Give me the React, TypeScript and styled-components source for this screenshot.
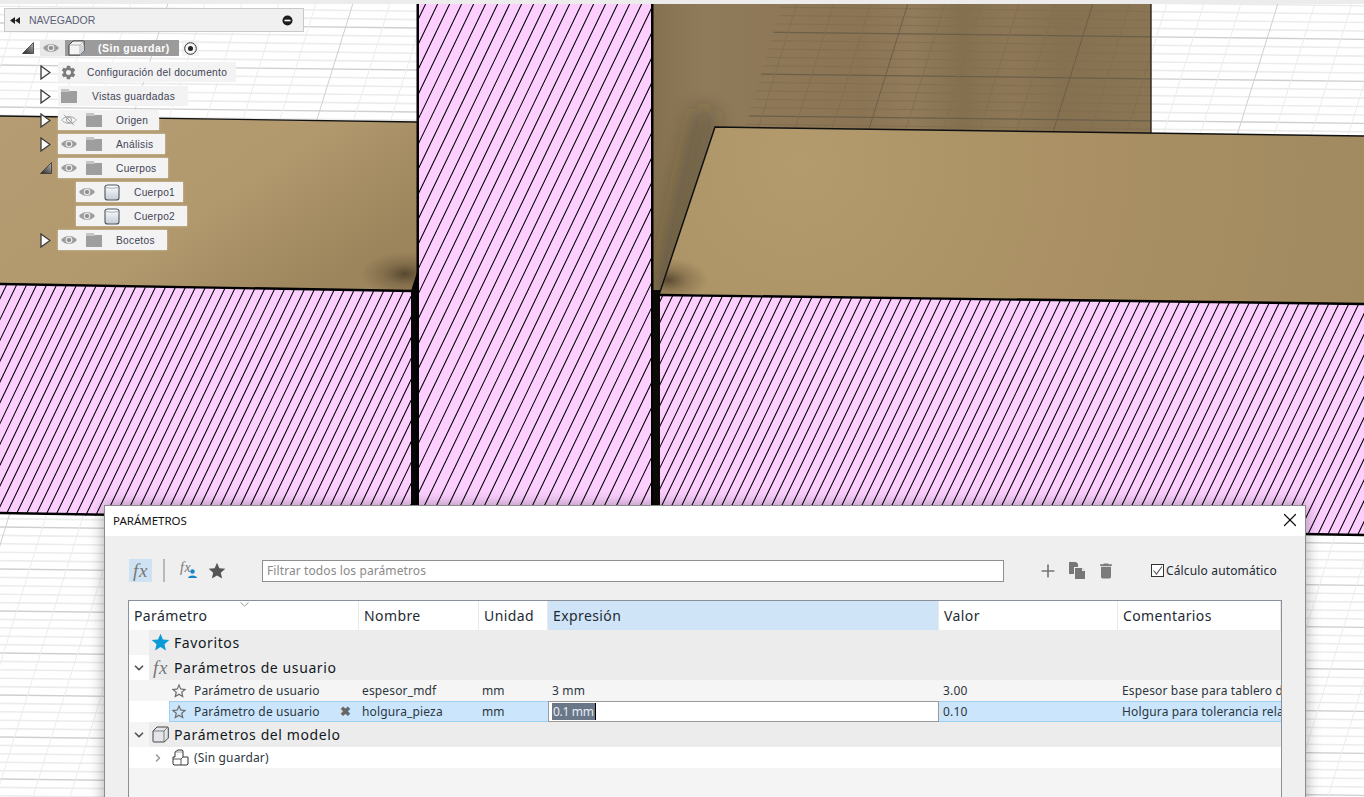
import React from "react";
import styled, { createGlobalStyle } from "styled-components";
import { X, ChevronDown, ChevronRight, Plus } from "lucide-react";
import { MdSettings, MdDelete, MdStar, MdStarBorder } from "react-icons/md";

const Global = createGlobalStyle`
  html, body { margin: 0; padding: 0; background: #fff; overflow: hidden; }
  #root { width: 1364px; height: 797px; }
`;

const Page = styled.div`
  position: relative;
  width: 1364px;
  height: 797px;
  overflow: hidden;
`;

const Scene = styled.svg`
  position: absolute;
  inset: 0;
  display: block;
`;

/* ---------- viewport drawing ---------- */
const horizontals = () => {
  const out: { y: number; major: boolean }[] = [];
  for (let i = -5; i < 110; i++) out.push({ y: 23 - 42 + (i * 42) / 5, major: i % 5 === 0 });
  return out;
};

const GridLines: React.FC<{ major: string; minor: string; slants: number[]; slope: number; step: number; minorWidth: number }> = ({
  major,
  minor,
  slants,
  slope,
  step,
  minorWidth,
}) => (
  <>
    {horizontals().map((l, i) => (
      <line
        key={i}
        x1={0}
        y1={l.y}
        x2={1364}
        y2={l.y + 1364 * 0.012}
        stroke={l.major ? major : minor}
        strokeWidth={l.major ? 1.3 : minorWidth}
      />
    ))}
    {slants.map((x, i) => (
      <line
        key={i}
        x1={x}
        y1={0}
        x2={x - slope * 800}
        y2={800}
        stroke={i % step === 0 ? major : minor}
        strokeWidth={1}
      />
    ))}
  </>
);

const range = (a: number, n: number, d: number) => Array.from({ length: n }, (_, i) => a + i * d);

const Hatch: React.FC<{ id: string; points: string; period: number; base: number; top: number; bottom: number; count: number }> = ({
  id,
  points,
  period,
  base,
  top,
  bottom,
  count,
}) => {
  const run = (bottom - top) / 2.08;
  return (
    <>
      <clipPath id={id}>
        <polygon points={points} />
      </clipPath>
      <polygon points={points} fill="#fccfff" />
      <g clipPath={`url(#${id})`} stroke="#000" strokeWidth={1.05}>
        {range(base, count, period).map((x) => (
          <line key={x} x1={x} y1={top} x2={x - run} y2={bottom} />
        ))}
      </g>
    </>
  );
};

const Viewport = () => (
  <Scene width={1364} height={797} viewBox="0 0 1364 797">
    <defs>
      <linearGradient id="wall" x1="0" x2="1" y1="0" y2="0">
        <stop offset="0" stopColor="#85714f" />
        <stop offset="0.1" stopColor="#8f7a59" />
        <stop offset="0.28" stopColor="#8d7756" />
        <stop offset="0.42" stopColor="#8a7453" />
        <stop offset="0.52" stopColor="#917b5a" />
        <stop offset="0.62" stopColor="#84704f" />
        <stop offset="0.72" stopColor="#8d7756" />
        <stop offset="0.82" stopColor="#857150" />
        <stop offset="1" stopColor="#8a7554" />
      </linearGradient>
      <radialGradient id="plateR" gradientUnits="userSpaceOnUse" cx="800" cy="165" r="620">
        <stop offset="0" stopColor="#b39b6d" />
        <stop offset="0.5" stopColor="#a98f63" />
        <stop offset="1" stopColor="#a08960" />
      </radialGradient>
      <linearGradient id="plateL" x1="0" x2="1" y1="0" y2="0.6">
        <stop offset="0" stopColor="#b59c72" />
        <stop offset="0.6" stopColor="#b1986d" />
        <stop offset="1" stopColor="#9c845c" />
      </linearGradient>
      <radialGradient id="spot">
        <stop offset="0" stopColor="#4a3d28" stopOpacity="0.85" />
        <stop offset="0.5" stopColor="#5a4a30" stopOpacity="0.35" />
        <stop offset="1" stopColor="#5a4a30" stopOpacity="0" />
      </radialGradient>
      <filter id="soft" x="-100%" y="-30%" width="300%" height="160%">
        <feGaussianBlur stdDeviation="10" />
      </filter>
      <clipPath id="clipWhite">
        <rect x={0} y={4} width={417} height={120} />
        <rect x={1152} y={4} width={212} height={132} />
        <polygon points="0,513 1364,535 1364,797 0,797" />
      </clipPath>
      <clipPath id="clipWallGrid">
        <polygon points="782,4 1151,4 1151,133 745,128" />
      </clipPath>
      <clipPath id="clipWall">
        <polygon points="653,4 1151,4 1151,134 715,127 660,294 653,294" />
      </clipPath>
      <clipPath id="clipPlateR">
        <polygon points="715,127 1364,136 1364,304 660,294" />
      </clipPath>
      <clipPath id="clipPlateL">
        <polygon points="0,116 417,122 417,291 0,284" />
      </clipPath>
    </defs>

    <rect width={1364} height={797} fill="#fff" />
    <rect width={1364} height={4} fill="#ececec" />

    <g clipPath="url(#clipWhite)">
      <GridLines major="#cfcfcf" minor="#ececec" slants={range(-16, 60, 37)} slope={0.31} step={5} minorWidth={1.6} />
    </g>

    {/* back wall */}
    <polygon points="653,4 1151,4 1151,134 715,127 660,294 653,294" fill="url(#wall)" />
    <g clipPath="url(#clipWallGrid)">
      <GridLines major="#6b5f4a" minor="#826f51" slants={range(-16, 60, 37)} slope={0.31} step={5} minorWidth={1} />
    </g>
    <g clipPath="url(#clipWall)">
      <line x1="706" y1="110" x2="664" y2="300" stroke="#2e2616" strokeWidth="26" strokeOpacity="0.32" filter="url(#soft)" />
    </g>
    <line x1="1151" y1="4" x2="1151" y2="134" stroke="#2b2416" strokeWidth={1.4} />

    {/* left plate */}
    <polygon points="0,116 417,122 417,291 0,284" fill="url(#plateL)" />
    <g clipPath="url(#clipPlateL)">
      <ellipse cx={405} cy={274} rx={44} ry={22} fill="url(#spot)" />
    </g>
    <line x1="0" y1="116" x2="417" y2="122" stroke="#111" strokeWidth={1.3} />

    {/* right plate */}
    <polygon points="715,127 1364,136 1364,304 660,294" fill="url(#plateR)" />
    <g clipPath="url(#clipPlateR)">
      <ellipse cx={668} cy={280} rx={40} ry={22} fill="url(#spot)" />
    </g>
    <polyline points="659,295 715,127 1364,136" fill="none" stroke="#111" strokeWidth={1.5} />

    {/* cut faces */}
    <Hatch id="cutL" points="0,285 411,291 411,525 0,513" period={10} base={7} top={284} bottom={530} count={56} />
    <Hatch id="cutR" points="660,295 1364,304 1364,535 660,525" period={10} base={663} top={295} bottom={540} count={84} />
    <Hatch id="cutC" points="418,4 652,4 652,514 418,514" period={12} base={425.6} top={4} bottom={514} count={41} />

    <line x1="0" y1="284" x2="412" y2="291" stroke="#000" strokeWidth={2.4} />
    <line x1="660" y1="295" x2="1364" y2="304" stroke="#000" strokeWidth={2.4} />
    <line x1="0" y1="513" x2="1364" y2="535" stroke="#000" strokeWidth={2.4} />
    <polygon points="411,291 417,272 418,510 411,510" fill="#050505" />
    <rect x={416.5} y={4} width={2.5} height={510} fill="#000" />
    <rect x={651} y={4} width={2.5} height={510} fill="#000" />
    <polygon points="653,290 660,290 660,510 653,510" fill="#0c0a06" />
  </Scene>
);

/* ---------- navigator ---------- */
const Navigator = styled.div`
  position: absolute;
  left: 4px;
  top: 8px;
  width: 300px;
  font-family: "Liberation Sans", Arial, sans-serif;
`;

const NavHeader = styled.div`
  box-sizing: border-box;
  height: 24px;
  display: flex;
  align-items: center;
  gap: 9px;
  padding: 0 10px 0 5px;
  background: #f0f0f0;
  border: 1px solid #c9c9c9;
  color: #5b6076;
  font-size: 10.5px;
`;

const NavTitle = styled.span`
  flex: 1;
`;

const NavTree = styled.div`
  margin-left: -4px;
  padding-top: 4px;
`;

const NavRow = styled.div<{ $level: number }>`
  height: 24px;
  display: flex;
  align-items: center;
  padding-left: ${(p) => 22 + p.$level * 18}px;
`;

const Twist = styled.span`
  width: 18px;
  flex: none;
  display: flex;
  justify-content: flex-start;
  align-items: center;
`;

const NavBlock = styled.div<{ $end?: number }>`
  height: 20px;
  display: flex;
  align-items: center;
  background: #f3f3f3;
  box-shadow: 0 0 2px rgba(255, 255, 255, 0.5);
  padding: 0 ${(p) => p.$end ?? 11}px 0 3px;
  gap: 9px;
`;

const NavLabel = styled.span<{ $gap: number }>`
  margin-left: ${(p) => p.$gap}px;
  font-size: 10.2px;
  letter-spacing: 0.28px;
  color: #3f4356;
  white-space: nowrap;
`;

const RootEye = styled.div`
  width: 25px;
  height: 16px;
  background: #e8e8e8;
  display: flex;
  align-items: center;
  padding-left: 3px;
  box-sizing: border-box;
`;

const RootBlock = styled.div`
  width: 114px;
  height: 16px;
  background: #9b9b9b;
  display: flex;
  align-items: center;
  padding-left: 3px;
  box-sizing: border-box;
`;

const RootLabel = styled.span`
  margin-left: 13px;
  color: #fff;
  font-size: 10.5px;
  font-weight: bold;
  letter-spacing: 0.5px;
`;

const RadioBox = styled.div`
  width: 17px;
  height: 16px;
  margin-left: 3px;
  background: rgba(240, 240, 240, 0.7);
  display: flex;
  align-items: center;
  justify-content: center;
`;

const Eye: React.FC<{ off?: boolean }> = ({ off }) => (
  <svg width="16" height="12" viewBox="0 0 16 12">
    {off ? (
      <>
        <path d="M.6 6C4 1.500 12 1.500 15.400 6 12 10.500 4 10.500.6 6Z" fill="none" stroke="#a8a8a8" strokeWidth="1" />
        <circle cx="8" cy="6" r="2.600" fill="none" stroke="#a8a8a8" />
        <path d="M3 .8 13 11.200" stroke="#9c9c9c" strokeWidth="1" />
      </>
    ) : (
      <>
        <path d="M0 6C4 .7 12 .7 16 6 12 11.300 4 11.300 0 6Z" fill="#9c9c9c" />
        <circle cx="8" cy="6" r="3.400" fill="#e4e4e4" />
        <circle cx="8" cy="6" r="2.100" fill="#8d8d8d" />
      </>
    )}
  </svg>
);

const Folder = () => (
  <svg width="16" height="14" viewBox="0 0 16 14">
    <path d="M0 0h7l1.500 2H16v12H0Z" fill="#9e9e9e" />
    <path d="M0 0h7l1.500 2v1H0Z" fill="#c4c4c4" />
  </svg>
);

const Gear = styled(MdSettings)`
  width: 17px;
  height: 17px;
  color: #7c7c7c;
  flex: none;
  margin-left: -1px;
`;

const Cyl = () => (
  <svg width="16" height="17" viewBox="0 0 16 17">
    <defs>
      <linearGradient id="cy" x1="0" x2="0" y1="0" y2="1">
        <stop offset="0" stopColor="#fff" />
        <stop offset="1" stopColor="#c4ccd6" />
      </linearGradient>
    </defs>
    <path d="M1 3Q1 1 4 1h8q3 0 3 2v11q0 2-3 2H4q-3 0-3-2Z" fill="url(#cy)" stroke="#4d5560" strokeWidth="1.100" />
    <path d="M1.500 3.500q6.500 1.500 13 0" fill="none" stroke="#9aa0a8" strokeWidth=".8" />
  </svg>
);

const NavCube = () => (
  <svg width="17" height="16" viewBox="0 0 17 16">
    <path d="M1 5 5 1h11v9.500l-4 4.500H1Z" fill="#f4f4f4" stroke="#333" strokeWidth=".9" />
    <path d="M12 15V5H1M12 5l4-4" fill="none" stroke="#999" strokeWidth=".7" />
    <path d="M12 5h4v5.500l-4 4.500Z" fill="#cfd4da" />
  </svg>
);

const Closed = () => (
  <svg width="11" height="15" viewBox="0 0 11 15">
    <path d="M1 1 10 7.500 1 14Z" fill="#fbfbfb" stroke="#3a3a3a" strokeWidth="1.300" />
  </svg>
);

const Opened = () => (
  <svg width="12" height="12" viewBox="0 0 12 12">
    <defs>
      <linearGradient id="opn" x1="0" x2="1" y1="1" y2="0">
        <stop offset="0" stopColor="#222" />
        <stop offset="1" stopColor="#b8b8b8" />
      </linearGradient>
    </defs>
    <path d="M.5 11.500 11.500.5v11Z" fill="url(#opn)" stroke="#333" strokeWidth=".8" />
  </svg>
);

const Rewind = () => (
  <svg width="10" height="7" viewBox="0 0 10 7">
    <path d="M5 0v7L0 3.500ZM10 0v7L5 3.500Z" fill="#222" />
  </svg>
);

const Collapse = () => (
  <svg width="11" height="11" viewBox="0 0 11 11">
    <circle cx="5.500" cy="5.500" r="5" fill="#1d1d1d" />
    <rect x="2.500" y="4.700" width="6" height="1.600" fill="#fff" />
  </svg>
);

const Radio = () => (
  <svg width="13" height="13" viewBox="0 0 13 13">
    <circle cx="6.500" cy="6.500" r="5.800" fill="#f5f5f5" stroke="#333" strokeWidth="1" />
    <circle cx="6.500" cy="6.500" r="2.500" fill="#222" />
  </svg>
);

const NavPanel = () => (
  <Navigator>
    <NavHeader>
      <Rewind />
      <NavTitle>NAVEGADOR</NavTitle>
      <Collapse />
    </NavHeader>
    <NavTree>
      <NavRow $level={0}>
        <Twist>
          <Opened />
        </Twist>
        <RootEye>
          <Eye />
        </RootEye>
        <RootBlock>
          <NavCube />
          <RootLabel>(Sin guardar)</RootLabel>
        </RootBlock>
        <RadioBox>
          <Radio />
        </RadioBox>
      </NavRow>
      <NavRow $level={1}>
        <Twist>
          <Closed />
        </Twist>
        <NavBlock $end={9}>
          <Gear />
          <NavLabel $gap={1}>Configuración del documento</NavLabel>
        </NavBlock>
      </NavRow>
      <NavRow $level={1}>
        <Twist>
          <Closed />
        </Twist>
        <NavBlock $end={13}>
          <Folder />
          <NavLabel $gap={6}>Vistas guardadas</NavLabel>
        </NavBlock>
      </NavRow>
      <NavRow $level={1}>
        <Twist>
          <Closed />
        </Twist>
        <NavBlock>
          <Eye off />
          <Folder />
          <NavLabel $gap={5}>Origen</NavLabel>
        </NavBlock>
      </NavRow>
      <NavRow $level={1}>
        <Twist>
          <Closed />
        </Twist>
        <NavBlock $end={12}>
          <Eye />
          <Folder />
          <NavLabel $gap={5}>Análisis</NavLabel>
        </NavBlock>
      </NavRow>
      <NavRow $level={1}>
        <Twist>
          <Opened />
        </Twist>
        <NavBlock $end={12}>
          <Eye />
          <Folder />
          <NavLabel $gap={5}>Cuerpos</NavLabel>
        </NavBlock>
      </NavRow>
      <NavRow $level={2}>
        <Twist />
        <NavBlock $end={8}>
          <Eye />
          <Cyl />
          <NavLabel $gap={5}>Cuerpo1</NavLabel>
        </NavBlock>
      </NavRow>
      <NavRow $level={2}>
        <Twist />
        <NavBlock $end={12}>
          <Eye />
          <Cyl />
          <NavLabel $gap={5}>Cuerpo2</NavLabel>
        </NavBlock>
      </NavRow>
      <NavRow $level={1}>
        <Twist>
          <Closed />
        </Twist>
        <NavBlock $end={12}>
          <Eye />
          <Folder />
          <NavLabel $gap={5}>Bocetos</NavLabel>
        </NavBlock>
      </NavRow>
    </NavTree>
  </Navigator>
);

/* ---------- dialog ---------- */
const Dialog = styled.div`
  position: absolute;
  left: 104px;
  top: 505px;
  width: 1202px;
  height: 320px;
  box-sizing: border-box;
  background: #efefef;
  border: 1px solid #8b8b8b;
  border-bottom: 0;
  box-shadow: 0 0 14px rgba(0, 0, 0, 0.35);
  font-family: "Noto Sans", sans-serif;
  color: #1e2a33;
`;

const TitleBar = styled.div`
  box-sizing: border-box;
  height: 30px;
  background: #fff;
  display: flex;
  align-items: center;
  justify-content: space-between;
  padding: 0 4px 2px 8px;
  font-size: 11.5px;
  color: #111;
`;

const Toolbar = styled.div`
  height: 23px;
  margin-top: 23px;
  padding-left: 24px;
  display: flex;
  align-items: center;
`;

const ToolToggle = styled.div`
  width: 23px;
  height: 23px;
  flex: none;
  background: #cfe2f3;
  display: flex;
  align-items: center;
  justify-content: center;
`;

const Fx = styled.span<{ $size?: number }>`
  display: block;
  font-family: "Liberation Serif", serif;
  font-style: italic;
  font-size: ${(p) => p.$size ?? 19}px;
  color: #777;
  line-height: 1;
  letter-spacing: 0.6px;
`;

const ToolSep = styled.div`
  width: 2px;
  height: 23px;
  flex: none;
  margin: 0 15px 0 11px;
  background: #b9b9b9;
`;

const FxUser = styled.div`
  position: relative;
  width: 18px;
  height: 20px;
  flex: none;
  margin-right: 9px;
`;

const FxUserBadge = styled.svg`
  position: absolute;
  right: 1px;
  bottom: 3px;
`;

const ToolStar = styled(MdStar)`
  width: 20px;
  height: 20px;
  color: #555;
  flex: none;
`;

const FilterBox = styled.div`
  box-sizing: border-box;
  width: 742px;
  height: 22px;
  flex: none;
  margin-left: 35px;
  background: #fff;
  border: 1px solid #8f8f8f;
  padding-left: 4px;
  font-size: 12px;
  letter-spacing: 0.1px;
  line-height: 20px;
  color: #8a8a8a;
`;

const ToolActions = styled.div`
  display: flex;
  align-items: center;
  flex: none;
  margin-left: 34px;
  gap: 10.5px;
  color: #777;
`;

const ActionPlus = styled(Plus)`
  width: 20px;
  height: 20px;
`;

const ActionTrash = styled(MdDelete)`
  width: 20px;
  height: 20px;
  color: #7b7b7b;
`;

const AutoCalc = styled.label`
  margin-left: 35px;
  flex: none;
  display: flex;
  align-items: center;
  gap: 2px;
  font-size: 12px;
  letter-spacing: 0.15px;
  white-space: nowrap;
`;

const Check = styled.span`
  box-sizing: border-box;
  width: 13px;
  height: 13px;
  border: 1px solid #333;
  background: #fff;
  display: flex;
`;

const Table = styled.div`
  box-sizing: border-box;
  margin: 18px 0 0 23px;
  width: 1154px;
  height: 210px;
  border: 1px solid #8a9099;
  border-bottom: 0;
  overflow: hidden;
  background: #f4f4f4;
`;

const HeadRow = styled.div`
  display: grid;
  grid-template-columns: 230px 120px 69px 391px 179px 163px;
  height: 29px;
  background: #fff;
  position: relative;
`;

const HeadCell = styled.div<{ $active?: boolean }>`
  box-sizing: border-box;
  padding: 5px 0 0 5px;
  font-size: 14px;
  letter-spacing: 0.4px;
  border-right: 1px solid #e9e9e9;
  background: ${(p) => (p.$active ? "#cfe5f7" : "#fff")};
`;

const SortMark = styled.svg`
  position: absolute;
  left: 111px;
  top: 1px;
`;

const SectionRow = styled.div<{ $band?: boolean; $h: number }>`
  height: ${(p) => p.$h}px;
  display: flex;
  align-items: center;
  background: ${(p) => (p.$band ? "#f5f5f5" : "#fff")};
`;

const Gutter = styled.div`
  width: 20px;
  flex: none;
  display: flex;
  justify-content: center;
  color: #555;
`;

const SectionBody = styled.div`
  flex: 1;
  height: 100%;
  display: flex;
  align-items: center;
  background: #ececec;
  padding-left: 1px;
`;

const SectionIcon = styled.span`
  width: 21px;
  flex: none;
  display: flex;
  justify-content: center;
  align-items: center;
`;

const SectionText = styled.span`
  font-size: 14px;
  letter-spacing: 0.6px;
  margin-left: 3px;
  font-weight: 400;
  color: #12181d;
`;

const BlueStar = styled(MdStar)`
  width: 21px;
  height: 21px;
  color: #0a9ad6;
`;

const DataRow = styled.div`
  height: 21px;
  display: grid;
  grid-template-columns: 229px 120px 70px 391px 179px 163px;
  align-items: center;
  font-size: 12px;
  letter-spacing: 0.15px;
  color: #2b3640;
  background: #f5f5f5;
`;

const SelectedWrap = styled.div`
  background: #fff;
  height: 21px;
  padding-left: 40px;
`;

const SelectedRow = styled(DataRow)`
  background: #cbe6fc;
  box-shadow: inset 0 1px 0 #9fd0f3, inset 0 -1px 0 #9fd0f3, inset 1px 0 0 #9fd0f3;
  grid-template-columns: 189px 120px 70px 391px 179px 163px;
`;

const NameCell = styled.div<{ $inset: number }>`
  display: flex;
  align-items: center;
  padding-left: ${(p) => p.$inset}px;
  min-width: 0;
  position: relative;
  white-space: nowrap;
`;

const RowStar = styled(MdStarBorder)`
  width: 18px;
  height: 18px;
  color: #6d6d6d;
  flex: none;
  margin-right: 6px;
`;

const ClearMark = styled.span`
  position: absolute;
  right: 7px;
  color: #666;
  font-size: 13px;
  font-weight: 700;
  line-height: 1;
`;

const Cell = styled.div`
  padding-left: 4px;
  white-space: nowrap;
  overflow: hidden;
`;

const EditCell = styled.div`
  box-sizing: border-box;
  height: 21px;
  background: #fff;
  border: 1px solid #9a9a9a;
  padding-left: 3px;
  display: flex;
  align-items: center;
`;

const Selection = styled.span`
  background: #697789;
  color: #e8edf2;
  height: 17px;
  line-height: 17px;
  padding: 0 1px;
  letter-spacing: -0.3px;
  border-right: 1px solid #000;
`;

const TreeRow = styled.div`
  height: 21px;
  background: #fff;
  display: flex;
  align-items: center;
  font-size: 12px;
  letter-spacing: 0.15px;
  padding-left: 23px;
  color: #2b3640;
`;

const TreeLabel = styled.span`
  margin-left: 5px;
`;

const TreeArrow = styled(ChevronRight)`
  width: 12px;
  height: 12px;
  color: #999;
  margin-right: 8px;
  stroke-width: 3;
`;

const GutterChevron = styled(ChevronDown)`
  width: 14px;
  height: 14px;
  stroke-width: 3;
`;

const CloseIcon = styled(X)`
  width: 22px;
  height: 22px;
  color: #111;
  stroke-width: 1.3;
`;

const BigCube = () => (
  <svg width="17" height="17" viewBox="0 0 17 17">
    <path d="M1 5 5 1h10.500q.8 0 .8.8V12l-4 4H1.800q-.8 0-.8-.8Z" fill="#e3e5e8" stroke="#333" strokeWidth=".9" />
    <path d="M1 5h11v11M12 5l4-4" fill="none" stroke="#555" strokeWidth=".7" />
  </svg>
);

const Assembly = () => (
  <svg width="17" height="17" viewBox="0 0 17 17">
    <path d="M3 8V3l3-2h4l1 1v6h5v7l-1 1H2l-1-1V8Z" fill="#fff" stroke="#333" strokeWidth="1" />
    <path d="M1 10h8v6M9 10l2-2" fill="none" stroke="#333" strokeWidth=".8" />
    <path d="M3 3h8" stroke="#777" strokeWidth=".7" />
  </svg>
);

const Copy = () => (
  <svg width="17" height="17" viewBox="0 0 17 17">
    <path d="M0 0h7l2 2v3H5v7H0Z" fill="#777" />
    <path d="M6 6h7l3 3v8H6Z" fill="#777" />
    <path d="M13 6v3h3Z" fill="#eee" />
  </svg>
);

const Params = () => (
  <Dialog>
    <TitleBar>
      <span>PARÁMETROS</span>
      <CloseIcon />
    </TitleBar>
    <Toolbar>
      <ToolToggle>
        <Fx>fx</Fx>
      </ToolToggle>
      <ToolSep />
      <FxUser>
        <Fx $size={14}>fx</Fx>
        <FxUserBadge width="9" height="9" viewBox="0 0 9 9">
          <circle cx="4.500" cy="2.500" r="2.200" fill="#1287c9" />
          <path d="M0 9c0-3.500 9-3.500 9 0Z" fill="#1287c9" />
        </FxUserBadge>
      </FxUser>
      <ToolStar />
      <FilterBox>Filtrar todos los parámetros</FilterBox>
      <ToolActions>
        <ActionPlus />
        <Copy />
        <ActionTrash />
      </ToolActions>
      <AutoCalc>
        <Check>
          <svg width="11" height="11" viewBox="0 0 11 11">
            <path d="M1.500 5.500 4.500 9 10 1.500" fill="none" stroke="#555" strokeWidth="1.100" />
          </svg>
        </Check>
        Cálculo automático
      </AutoCalc>
    </Toolbar>
    <Table>
      <HeadRow>
        <HeadCell>Parámetro</HeadCell>
        <HeadCell>Nombre</HeadCell>
        <HeadCell>Unidad</HeadCell>
        <HeadCell $active>Expresión</HeadCell>
        <HeadCell>Valor</HeadCell>
        <HeadCell>Comentarios</HeadCell>
        <SortMark width="9" height="5" viewBox="0 0 9 5">
          <path d="M.5.500 4.500 4 8.500.5" fill="none" stroke="#999" />
        </SortMark>
      </HeadRow>
      <SectionRow $band $h={25}>
        <Gutter />
        <SectionBody>
          <SectionIcon>
            <BlueStar />
          </SectionIcon>
          <SectionText>Favoritos</SectionText>
        </SectionBody>
      </SectionRow>
      <SectionRow $h={25}>
        <Gutter>
          <GutterChevron />
        </Gutter>
        <SectionBody>
          <SectionIcon>
            <Fx>fx</Fx>
          </SectionIcon>
          <SectionText>Parámetros de usuario</SectionText>
        </SectionBody>
      </SectionRow>
      <DataRow>
        <NameCell $inset={41}>
          <RowStar />
          Parámetro de usuario
        </NameCell>
        <Cell>espesor_mdf</Cell>
        <Cell>mm</Cell>
        <Cell>3 mm</Cell>
        <Cell>3.00</Cell>
        <Cell>Espesor base para tablero de MDF</Cell>
      </DataRow>
      <SelectedWrap>
        <SelectedRow>
          <NameCell $inset={1}>
            <RowStar />
            Parámetro de usuario
            <ClearMark>✖</ClearMark>
          </NameCell>
          <Cell>holgura_pieza</Cell>
          <Cell>mm</Cell>
          <EditCell>
            <Selection>0.1 mm</Selection>
          </EditCell>
          <Cell>0.10</Cell>
          <Cell>Holgura para tolerancia relativa</Cell>
        </SelectedRow>
      </SelectedWrap>
      <SectionRow $band $h={25}>
        <Gutter>
          <GutterChevron />
        </Gutter>
        <SectionBody>
          <SectionIcon>
            <BigCube />
          </SectionIcon>
          <SectionText>Parámetros del modelo</SectionText>
        </SectionBody>
      </SectionRow>
      <TreeRow>
        <TreeArrow />
        <Assembly />
        <TreeLabel>(Sin guardar)</TreeLabel>
      </TreeRow>
    </Table>
  </Dialog>
);

export default function App() {
  return (
    <Page>
      <Global />
      <Viewport />
      <NavPanel />
      <Params />
    </Page>
  );
}
